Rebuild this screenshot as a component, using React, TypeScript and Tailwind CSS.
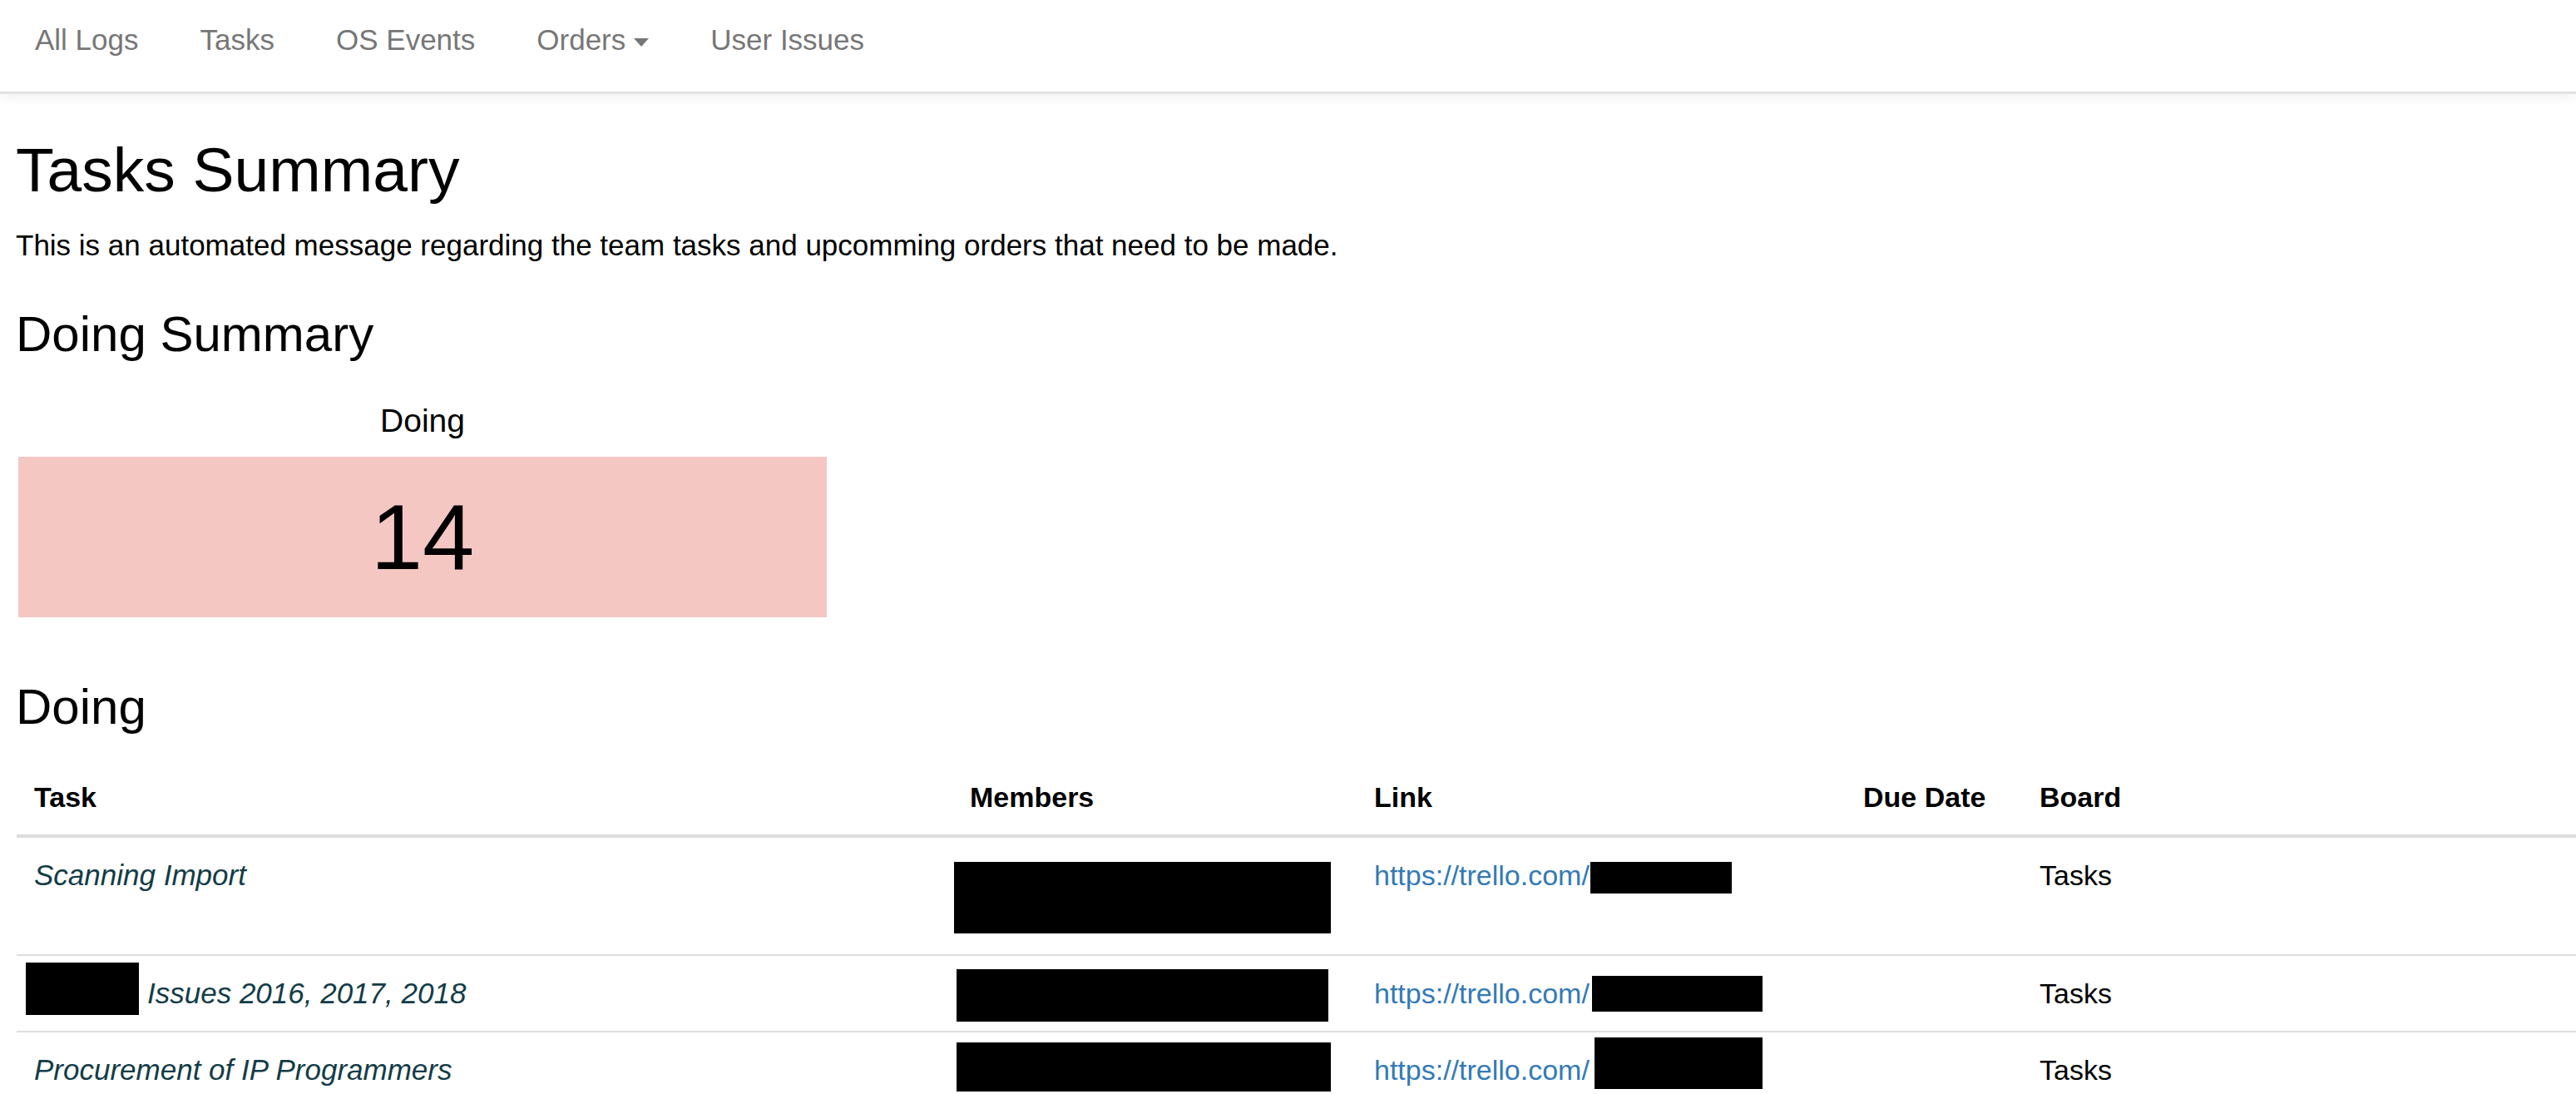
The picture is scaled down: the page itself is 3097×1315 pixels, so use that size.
import React from 'react';

type Row = {
  task: React.ReactNode;
  members: React.ReactNode;
  link: React.ReactNode;
  due: string;
  board: string;
};

const Redacted = ({ className }: { className: string }) => (
  <span className={`inline-block bg-black align-top ${className}`} />
);

const TrelloLink = ({ box }: { box: string }) => (
  <span className="whitespace-nowrap">
    <a className="text-[#337ab7]">https://trello.com/</a>
    <Redacted className={box} />
  </span>
);

const rows: Row[] = [
  {
    task: 'Scanning Import',
    members: <div className="ml-[-19px] mt-[9px] mb-[5px] h-[86px] w-[453px] bg-black" />,
    link: <TrelloLink box="ml-[1px] mt-[9px] mb-[3px] h-[38px] w-[170px]" />,
    due: '',
    board: 'Tasks',
  },
  {
    task: (
      <>
        <Redacted className="ml-[-10px] mr-[10px] mt-[-12px] mb-[-1px] h-[63px] w-[136px]" />
        Issues 2016, 2017, 2018
      </>
    ),
    members: <Redacted className="ml-[-16px] mt-[-4px] mb-[-9px] h-[63px] w-[447px]" />,
    link: <TrelloLink box="ml-[3px] mt-[4px] mb-[3px] h-[43px] w-[205px]" />,
    due: '',
    board: 'Tasks',
  },
  {
    task: 'Procurement of IP Programmers',
    members: <Redacted className="ml-[-16px] mt-[-8px] mb-[-1px] h-[59px] w-[450px]" />,
    link: <TrelloLink box="ml-[6px] mt-[-14px] mb-[2px] h-[62px] w-[202px]" />,
    due: '',
    board: 'Tasks',
  },
];

const navItems = ['All Logs', 'Tasks', 'OS Events', 'Orders', 'User Issues'];

export default function App() {
  return (
    <div className="h-[1315px] overflow-hidden bg-white font-['Liberation_Sans',Arial,sans-serif] text-black">
      {/* top nav */}
      <nav className="relative h-[113px] border-b-[3px] border-[#e3e3e3] bg-white shadow-[0_4px_14px_rgba(0,0,0,0.06)]">
        <ul className="flex pl-[5px] pt-[28px]">
          {navItems.map((item) => (
            <li key={item} className="px-[37px] text-[35px] leading-[40px] text-[#777]">
              {item}
              {item === 'Orders' && (
                <span className="ml-[10px] inline-block h-0 w-0 align-middle border-l-[9px] border-r-[9px] border-t-[10px] border-l-transparent border-r-transparent border-t-[#777]" />
              )}
            </li>
          ))}
        </ul>
      </nav>

      <main className="pl-[19px] pt-[51px]">
        <h1 className="text-[75px] leading-[80px]">Tasks Summary</h1>
        <p className="mt-[28px] text-[35px] leading-[46px]">
          This is an automated message regarding the team tasks and upcomming orders that need to be made.
        </p>

        <h2 className="mt-[51px] text-[60px] leading-[66px]">Doing Summary</h2>
        <div className="ml-[3px] w-[972px]">
          <div className="mt-[49px] text-center text-[39px] leading-[44px]">Doing</div>
          <div className="mt-[21px] flex h-[193px] items-center justify-center bg-[#f4c7c3] text-[112px] leading-[112px]">
            14
          </div>
        </div>

        <h2 className="mt-[75px] text-[60px] leading-[66px]">Doing</h2>

        <table className="ml-[1px] mt-[30px] w-[3077px] table-fixed border-collapse text-[34px] leading-[50px]">
          <colgroup>
            <col className="w-[1125px]" />
            <col className="w-[486px]" />
            <col className="w-[588px]" />
            <col className="w-[212px]" />
            <col />
          </colgroup>
          <thead>
            <tr>
              {['Task', 'Members', 'Link', 'Due Date', 'Board'].map((h) => (
                <th
                  key={h}
                  className="border-b-4 border-[#ddd] py-[20px] pl-[21px] pr-[8px] text-left font-bold"
                >
                  {h}
                </th>
              ))}
            </tr>
          </thead>
          <tbody>
            {rows.map((r, idx) => (
              <tr key={idx} className={idx > 0 ? 'border-t-2 border-[#ddd]' : ''}>
                <td className="py-[20px] pl-[21px] pr-[8px] align-top text-[35px] italic text-[#133c47]">{r.task}</td>
                <td className="py-[20px] pl-[21px] pr-[8px] align-top">{r.members}</td>
                <td className="py-[20px] pl-[21px] pr-[8px] align-top">{r.link}</td>
                <td className="py-[20px] pl-[21px] pr-[8px] align-top">{r.due}</td>
                <td className="py-[20px] pl-[21px] pr-[8px] align-top">{r.board}</td>
              </tr>
            ))}
          </tbody>
        </table>
      </main>
    </div>
  );
}
